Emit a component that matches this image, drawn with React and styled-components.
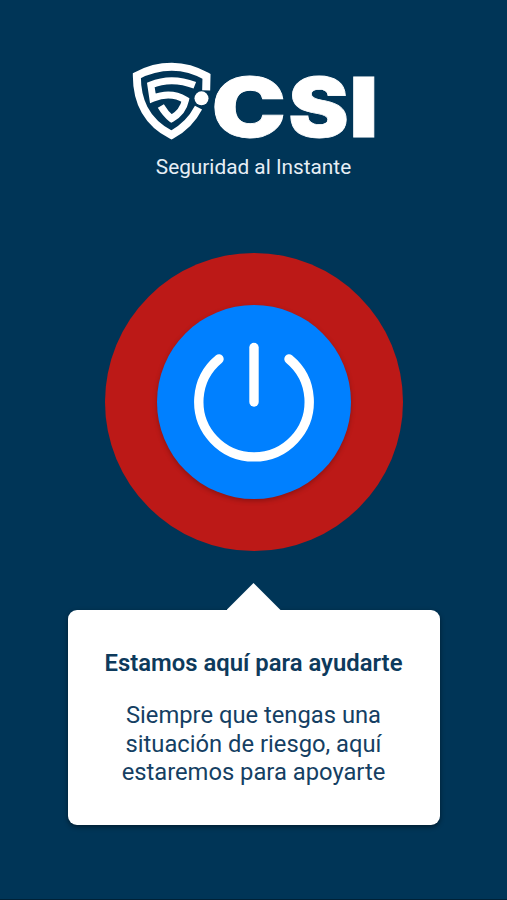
import React from 'react'
import styled, { createGlobalStyle } from 'styled-components'

const GlobalStyle = createGlobalStyle`
  * {
    box-sizing: border-box;
  }
  body {
    margin: 0;
    background: #003557;
    font-family: Roboto, sans-serif;
  }
`

const Screen = styled.main`
  display: flex;
  flex-direction: column;
  align-items: center;
  height: 900px;
  padding-top: 52px;
  background: #003557;
  border-bottom: 1px solid #002136;
  overflow: hidden;
`

const Logo = styled.svg`
  display: block;
  width: 254px;
  height: 110px;
  flex: none;
  overflow: visible;

  text {
    font-family: Inter, sans-serif;
    font-weight: 900;
    font-size: 83px;
    fill: #fff;
    stroke: #fff;
    stroke-width: 0.8px;
  }
`

const Tagline = styled.p`
  margin: -7px 0 0;
  font-size: 20.8px;
  line-height: 25px;
  color: #e6eef5;
`

const Ring = styled.div`
  display: flex;
  align-items: center;
  justify-content: center;
  flex: none;
  width: 298px;
  height: 298px;
  margin-top: 72.5px;
  border-radius: 50%;
  background: #bc1917;
`

const PowerButton = styled.button`
  display: flex;
  align-items: center;
  justify-content: center;
  width: 194px;
  height: 194px;
  padding: 0;
  border: none;
  border-radius: 50%;
  background: #0080ff;
  box-shadow: 0 2px 5px rgba(0, 0, 0, 0.25);
`

const Arrow = styled.div`
  flex: none;
  width: 54px;
  height: 27px;
  margin-top: 32.5px;
  background: #fff;
  clip-path: polygon(50% 0, 100% 100%, 0 100%);
`

const Card = styled.section`
  width: 372px;
  height: 215px;
  padding: 39px 30px 0;
  border-radius: 9px;
  background: #fff;
  box-shadow: 0 2px 5px rgba(0, 0, 0, 0.45);
  text-align: center;
  color: #0d3a5c;
`

const Title = styled.h1`
  margin: 0;
  font-size: 23.85px;
  font-weight: 600;
  line-height: 28px;
  white-space: nowrap;
`

const Message = styled.p`
  margin: 24.2px 0 0;
  font-size: 23.75px;
  line-height: 28.4px;
  color: #153f63;
  white-space: nowrap;
`

function CsiLogo() {
  return (
    <Logo viewBox="0 -4 254 110" role="img" aria-label="CSI">
      {/* shield */}
      <g transform="translate(-6.5 -6) scale(0.33333)" fill="none" stroke="#fff">
        <path
          d="M257 121 L258 79 Q208 50 154 50 Q98 50 49 77 C49 145 70 212 153 255 C192 234 216 208 234 173"
          strokeWidth="24"
        />
        <path
          d="M223 106 Q153 79 91 105 L97 145 Q150 123 195 150 C190 174 176 193 153 206 Q135 192 121 168"
          strokeWidth="21"
        />
        <circle cx="243" cy="145" r="21" fill="#fff" stroke="none" />
      </g>
      <text x="84.5" y="81" textLength="74.5" lengthAdjust="spacingAndGlyphs">C</text>
      <text x="161.3" y="81" textLength="60.5" lengthAdjust="spacingAndGlyphs">S</text>
      <text x="222" y="81" textLength="29.5" lengthAdjust="spacingAndGlyphs">I</text>
    </Logo>
  )
}

function PowerIcon() {
  return (
    <svg width="120" height="120" viewBox="0 0 120 120" fill="none" stroke="#fff" strokeWidth="9.4" strokeLinecap="round">
      <path d="M60 5.5 V60" />
      <path d="M25 17 A55.2 55.2 0 1 0 95 17" />
    </svg>
  )
}

export default function App() {
  return (
    <>
      <GlobalStyle />
      <Screen>
        <CsiLogo />
        <Tagline>Seguridad al Instante</Tagline>
        <Ring>
          <PowerButton aria-label="Activar">
            <PowerIcon />
          </PowerButton>
        </Ring>
        <Arrow />
        <Card>
          <Title>Estamos aquí para ayudarte</Title>
          <Message>
            Siempre que tengas una<br />
            situación de riesgo, aquí<br />
            estaremos para apoyarte
          </Message>
        </Card>
      </Screen>
    </>
  )
}
